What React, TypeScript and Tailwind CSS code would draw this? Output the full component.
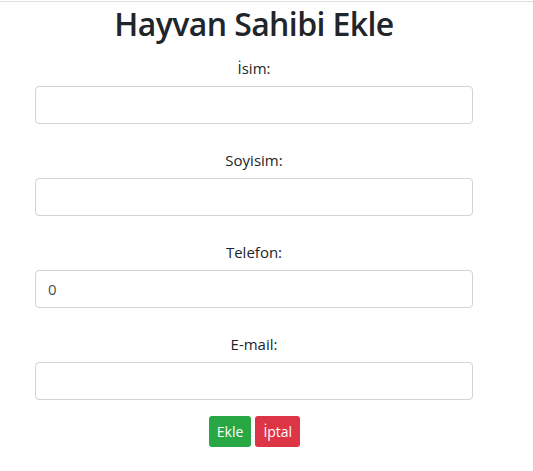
import React from 'react';

const fields = [
  { label: 'İsim:', value: '' },
  { label: 'Soyisim:', value: '' },
  { label: 'Telefon:', value: '0' },
  { label: 'E-mail:', value: '' },
];

export default function App() {
  return (
    <div className="min-h-screen bg-white text-[#212529] font-['Open_Sans','Noto_Sans',sans-serif]">
      <div className="border-t border-[#dfdfdf] mt-[1px]" />
      <div className="w-[438px] ml-[35px]">
        <h1 className="text-center text-[32px] font-semibold tracking-[-0.6px] leading-[1.2] mt-[3px] mb-[13px]">Hayvan Sahibi Ekle</h1>

        {fields.map((f) => (
          <div key={f.label} className="mb-[24px]">
            <label className="block text-center text-[15px] leading-[24px] mb-[6px]">{f.label}</label>
            <input
              defaultValue={f.value}
              className="block w-full h-[38px] px-3 rounded-[4px] border border-[#ced4da] text-[15px] text-[#495057] outline-none"
            />
          </div>
        ))}

        <div className="flex justify-center gap-1 -mt-[8px] pl-[1px]">
          <button className="h-[31px] px-2 rounded-[3px] bg-[#28a745] text-white text-[14px]">Ekle</button>
          <button className="h-[31px] px-2 rounded-[3px] bg-[#dc3545] text-white text-[14px]">İptal</button>
        </div>
      </div>
    </div>
  );
}
